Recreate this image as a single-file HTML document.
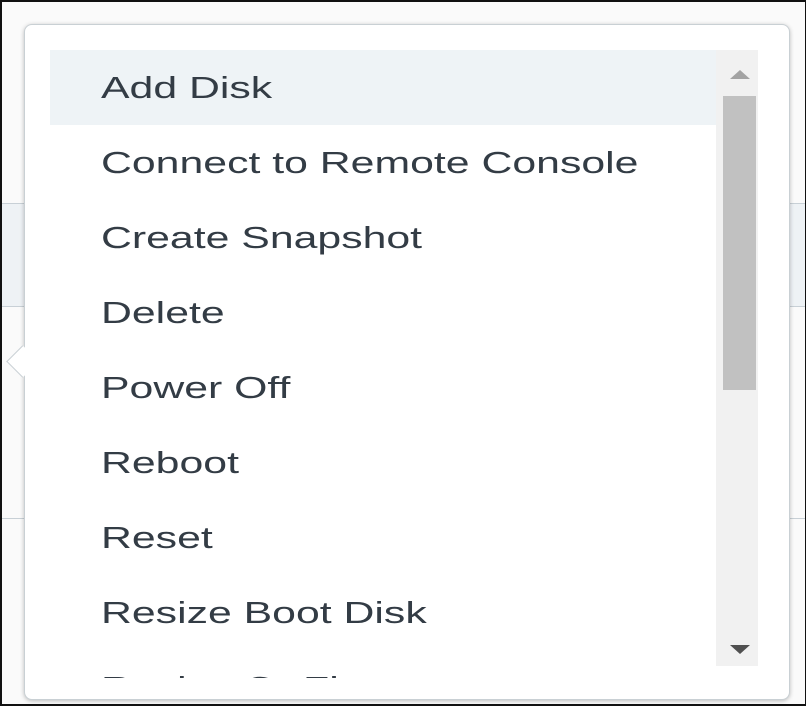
<!DOCTYPE html>
<html><head><style>
html,body{margin:0;padding:0}
body{width:806px;height:706px;position:relative;overflow:hidden;background:#fafafa;font-family:"Liberation Sans",sans-serif}
.frame{position:absolute;inset:0;border:2px solid #111;border-right-width:1px;box-sizing:border-box;z-index:10;pointer-events:none}
.band{position:absolute;left:0;right:0;top:203px;height:102px;background:#eef2f5;border-top:1px solid #c8d0d6;border-bottom:1px solid #c8d0d6}
.line{position:absolute;left:0;right:0;top:518px;border-top:1px solid #c8d0d6}
.pop{position:absolute;left:24px;top:24px;width:766px;height:676px;background:#fff;border:1px solid #c9d0d4;border-radius:8px;box-shadow:0 1px 4px rgba(0,0,0,.25);box-sizing:border-box}
.arrow{position:absolute;left:11px;top:350px;width:22px;height:22px;background:#fff;border-left:1px solid #c9d0d4;border-bottom:1px solid #c9d0d4;transform:rotate(45deg);z-index:2}
.list{position:absolute;left:50px;top:50px;width:666px;height:628px;overflow:hidden;z-index:3;background:transparent}
.item{height:75px;line-height:75px;padding-left:51px;font-size:31px;color:#333c45;white-space:nowrap}
.item span{display:inline-block;transform:scaleX(1.38);transform-origin:left center}
.item.h{background:#eef3f6}
.sb{position:absolute;left:716px;top:50px;width:42px;height:616px;background:#f1f1f1;z-index:3}
.thumb{position:absolute;left:7px;top:46px;width:33px;height:294px;background:#c1c1c1}
.up{position:absolute;left:14px;top:20px;border-left:10px solid transparent;border-right:10px solid transparent;border-bottom:9px solid #a3a3a3}
.dn{position:absolute;left:14px;top:595px;border-left:10px solid transparent;border-right:10px solid transparent;border-top:9px solid #505050}
</style></head><body>
<div class="band"></div><div class="line"></div>
<div class="pop"></div>
<div class="arrow"></div>
<div class="list">
<div class="item h"><span>Add Disk</span></div>
<div class="item"><span>Connect to Remote Console</span></div>
<div class="item"><span>Create Snapshot</span></div>
<div class="item"><span>Delete</span></div>
<div class="item"><span>Power Off</span></div>
<div class="item"><span>Reboot</span></div>
<div class="item"><span>Reset</span></div>
<div class="item"><span>Resize Boot Disk</span></div>
<div class="item"><span>Resize Or Flavor</span></div>
</div>
<div class="sb"><div class="up"></div><div class="thumb"></div><div class="dn"></div></div>
<div class="frame"></div>
</body></html>
